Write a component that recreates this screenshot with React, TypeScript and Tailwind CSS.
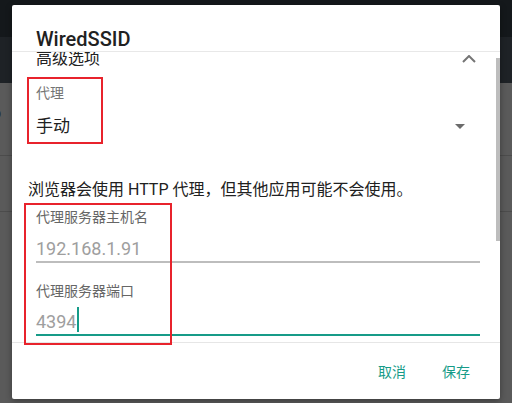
const teal = "#169b88";

const ChevronUp = () => (
  <svg width="14" height="8" viewBox="0 0 14 8" className="mt-[3px]">
    <polyline points="1,7 7,1 13,7" fill="none" stroke="#757575" strokeWidth="2" />
  </svg>
);

const Caret = () => (
  <svg width="10" height="5" viewBox="0 0 10 5">
    <polygon points="0,0 10,0 5,5" fill="#6b6b6b" />
  </svg>
);

export default function App() {
  return (
    <div className="relative w-[512px] h-[403px] overflow-hidden bg-[#5a5a5a] font-['Roboto','Noto_Sans_CJK_SC',sans-serif]">
      {/* app behind the dialog */}
      <div className="flex flex-col">
        <div className="h-[37px] bg-[#14181b]" />
        <div className="h-[46px] bg-[#1e2226]" />
        <div className="h-[73px] border-b border-[#4c4c4c] pt-[18px]">
          <span className="block -ml-[9px] text-[18px] leading-6 text-[#202020]">o</span>
        </div>
        <div className="h-[56px] border-b border-[#4c4c4c]" />
      </div>

      {/* dialog */}
      <div className="absolute left-[12px] top-[5px] w-[488px] h-[394px] bg-white rounded-[2px] shadow-[0_2px_6px_rgba(0,0,0,0.35)] flex flex-col">
        <div className="h-[47px] shrink-0 border-b border-[#e8e8e8] pl-6 pt-[22px] text-[20px] leading-6 font-medium text-[#212121]">
          WiredSSID
        </div>

        <div className="relative h-[291px] shrink-0 overflow-hidden border-b border-[#e6e6e6]">
          <div className="flex items-start justify-between pl-6 pr-6">
            <span className="text-[16px] leading-[13px] text-[#212121]">高级选项</span>
            <ChevronUp />
          </div>

          <div className="mt-[18px] pl-6 text-[14px] leading-5 text-[#757575]">代理</div>
          <div className="mt-[11px] flex h-[24px] items-center justify-between pl-6 pr-[35px]">
            <span className="text-[17px] leading-6 text-[#212121]">手动</span>
            <Caret />
          </div>

          <p className="mt-[40px] pl-4 text-[16px] leading-6 text-[#212121]">
            浏览器会使用 HTTP 代理，但其他应用可能不会使用。
          </p>

          <div className="pl-6 pr-5">
            <div className="mt-[5px] text-[14px] leading-5 text-[#666666]">代理服务器主机名</div>
            <div className="mt-[10px] text-[18px] leading-6 text-[#9e9e9e]">192.168.1.91</div>
            <div className="h-[2px] bg-[#bdbdbd]" />

            <div className="mt-[18px] text-[14px] leading-5 text-[#666666]">代理服务器端口</div>
            <div className="mt-[9px] flex h-[24px] items-start">
              <span className="text-[18px] leading-6 text-[#9e9e9e]">4394</span>
              <span className="ml-[1px] -mt-[3px] h-[25px] w-[2px] bg-[#169b88]" />
            </div>
            <div className="h-[2px]" style={{ backgroundColor: teal }} />
          </div>

          <div className="absolute right-0 top-[6px] h-[183px] w-[4px] bg-[#bdbdbd]" />
        </div>

        <div className="flex justify-end gap-[36px] pr-[30px] pt-[19px] text-[14px] leading-5 text-[#169b88]">
          <span>取消</span>
          <span>保存</span>
        </div>
      </div>

      {/* annotation boxes */}
      <div className="absolute left-[27px] top-[77px] h-[67px] w-[76px] border-2 border-[#e8232c]" />
      <div className="absolute left-[24px] top-[203px] h-[142px] w-[148px] border-2 border-[#e8232c]" />
    </div>
  );
}
